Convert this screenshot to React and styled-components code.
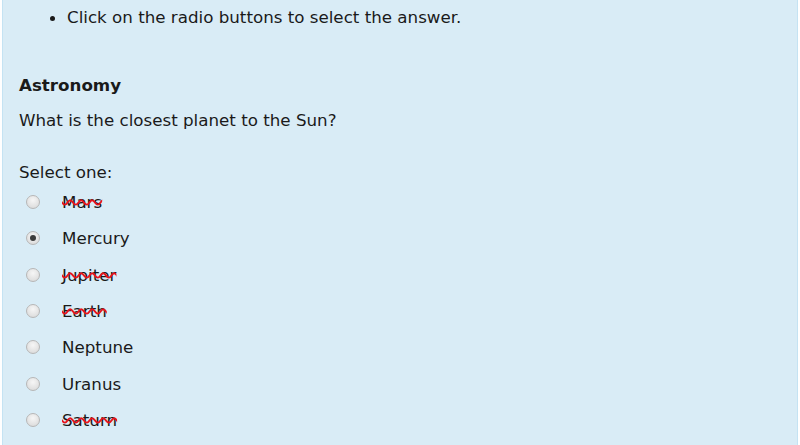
import styled, { createGlobalStyle } from "styled-components"

const Global = createGlobalStyle`
  html, body {
    margin: 0;
    padding: 0;
    background: #ffffff;
  }
  body {
    font-family: "DejaVu Sans", Verdana, sans-serif;
    color: #1a1a1a;
  }
`

const Formulation = styled.div`
  margin: 0 2px;
  height: 445px;
  box-sizing: border-box;
  background: #d9ecf6;
  border-left: 1px solid #c4e3f3;
  border-right: 1px solid #c4e3f3;
  padding: 6px 0 0 16px;
  overflow: hidden;
  font-size: 16.7px;
  line-height: 22px;
`

const Instructions = styled.ul`
  margin: 0;
  padding-left: 48px;
`

const Heading = styled.h3`
  margin: 46px 0 0;
  font-size: 16.7px;
  font-weight: bold;
  line-height: 22px;
`

const Question = styled.p`
  margin: 13px 0 0;
`

const Prompt = styled.div`
  margin-top: 30px;
`

const Answers = styled.div`
  display: flex;
  flex-direction: column;
  margin-top: 1px;
`

const Option = styled.label`
  display: flex;
  align-items: center;
  height: 36.33px;
`

const Radio = styled.span`
  box-sizing: border-box;
  width: 14px;
  height: 14px;
  margin: 0 22px 0 7px;
  border-radius: 50%;
  border: 1px solid #b7b7b7;
  background: radial-gradient(circle at 50% 35%, #f6f6f6 0%, #e0e0e0 70%, #d0d0d0 100%);
  display: flex;
  align-items: center;
  justify-content: center;
  &::after {
    content: "";
    width: 6px;
    height: 6px;
    border-radius: 50%;
    background: #3c3c3c;
    display: ${props => (props.checked ? "block" : "none")};
  }
`

const Label = styled.span`
  text-decoration: ${props => (props.struck ? "line-through wavy #e8131b" : "none")};
  text-decoration-thickness: 1.5px;
`

const options = [
  { name: "Mars", struck: true },
  { name: "Mercury", checked: true },
  { name: "Jupiter", struck: true },
  { name: "Earth", struck: true },
  { name: "Neptune" },
  { name: "Uranus" },
  { name: "Saturn", struck: true },
]

const App = () => {
  return (
    <>
      <Global />
      <Formulation>
        <Instructions>
          <li>Click on the radio buttons to select the answer.</li>
        </Instructions>
        <Heading>Astronomy</Heading>
        <Question>What is the closest planet to the Sun?</Question>
        <Prompt>Select one:</Prompt>
        <Answers>
          {options.map(o => (
            <Option key={o.name}>
              <Radio checked={o.checked} />
              <Label struck={o.struck}>{o.name}</Label>
            </Option>
          ))}
        </Answers>
      </Formulation>
    </>
  )
}

export default App
